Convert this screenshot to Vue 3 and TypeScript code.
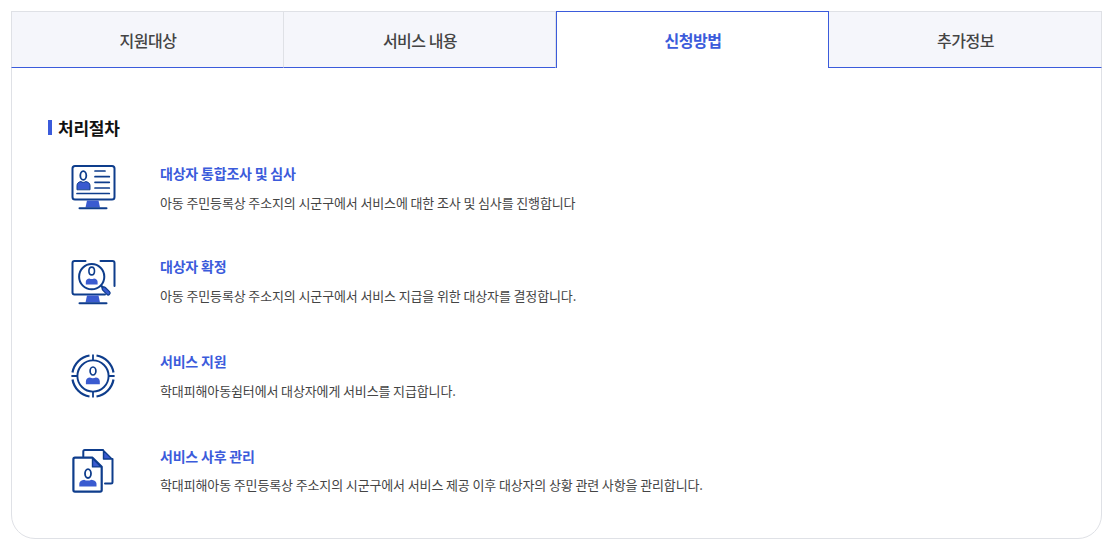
<script setup lang="ts">
const tabs = [
  { label: '지원대상', active: false },
  { label: '서비스 내용', active: false },
  { label: '신청방법', active: true },
  { label: '추가정보', active: false },
]
const steps = [
  { id: 1, title: '대상자 통합조사 및 심사', desc: '아동 주민등록상 주소지의 시군구에서 서비스에 대한 조사 및 심사를 진행합니다' },
  { id: 2, title: '대상자 확정', desc: '아동 주민등록상 주소지의 시군구에서 서비스 지급을 위한 대상자를 결정합니다.' },
  { id: 3, title: '서비스 지원', desc: '학대피해아동쉼터에서 대상자에게 서비스를 지급합니다.' },
  { id: 4, title: '서비스 사후 관리', desc: '학대피해아동 주민등록상 주소지의 시군구에서 서비스 제공 이후 대상자의 상황 관련 사항을 관리합니다.' },
]
</script>

<template>
  <div class="page">
    <div class="card">
      <div class="tabs">
        <div v-for="t in tabs" :key="t.label" class="tab" :class="{ active: t.active }">{{ t.label }}</div>
      </div>
      <div class="body">
        <h2 class="heading"><span>처리절차</span></h2>
        <div class="steps">
          <div v-for="s in steps" :key="s.id" class="step">
            <div class="icon">
              <svg v-if="s.id === 1" width="46" height="46" viewBox="0 0 46 46" fill="none" stroke="#0e3d8c" stroke-width="2" stroke-linecap="round" stroke-linejoin="round">
                <rect x="1.5" y="1" width="42" height="33.5" rx="2.5" />
                <path d="M16 35.5h11.5l1.5 7H14.5z" fill="#3a5bd0" stroke="none" />
                <path d="M8.5 43.2h27" />
                <ellipse cx="12.3" cy="10.5" rx="3" ry="4.4" stroke-width="1.8" />
                <path d="M6 24.4v-4c0-2.4 2-3.6 4-3.8 1.4 1 3.2 1 4.6 0 2 .2 4.4 1.4 4.4 3.8v4z" fill="#3a5bd0" stroke-width="1" />
                <path d="M24 6h10M24 11.7h14.3M24 17.3h14.3M24 23h14.3M6 28.5h32.3" stroke-width="1.7" />
              </svg>
              <svg v-else-if="s.id === 2" width="46" height="46" viewBox="0 0 46 46" fill="none" stroke="#0e3d8c" stroke-width="2" stroke-linecap="round" stroke-linejoin="round">
                <path d="M14.5 1H3.5Q1.5 1 1.5 3v29.5q0 2 2 2H34" />
                <path d="M29.5 1h12q2 0 2 2v23" />
                <path d="M16 35.5h11.5l1.5 7H14.5z" fill="#3a5bd0" stroke="none" />
                <path d="M8.5 43.2h27" />
                <circle cx="20.7" cy="16.7" r="12.6" />
                <ellipse cx="20.7" cy="11" rx="2.8" ry="3.9" stroke-width="1.6" />
                <path d="M14.8 24.6v-2.8c0-2 1.8-3.2 3.6-3.4 1.4.8 3.2.8 4.6 0 1.8.2 3.6 1.4 3.6 3.4v2.8z" fill="#3a5bd0" stroke="none" />
                <path d="M30.5 26.2l2 2" stroke-width="2.4" />
                <path d="M33 28.8l4.2 4.2" stroke="#0e3d8c" stroke-width="5" />
                <path d="M33 28.8l4.2 4.2" stroke="#3a5bd0" stroke-width="2.6" />
              </svg>
              <svg v-else-if="s.id === 3" width="46" height="46" viewBox="0 0 46 46" fill="none" stroke="#0e3d8c" stroke-width="2" stroke-linecap="butt">
                <path d="M25.5 1.5A20.8 20.8 0 0 1 42.5 18.5M42.5 25.5A20.8 20.8 0 0 1 25.5 42.5M18.5 42.5A20.8 20.8 0 0 1 1.5 25.5M1.5 18.5A20.8 20.8 0 0 1 18.5 1.5" stroke-width="2.2" />
                <circle cx="22" cy="22" r="15.6" stroke-width="1.9" />
                <path d="M22 0.4v6.4M22 37.2v6.4M0.4 22h6.4M37.2 22h6.4" stroke-width="1.8" />
                <ellipse cx="22" cy="17" rx="2.9" ry="4" stroke-width="1.7" />
                <path d="M14.9 30.2v-3c0-2.2 1.9-3.5 4-3.7 1.7 1 4.2 1 5.9 0 2.1.2 4 1.5 4 3.7v3z" fill="#3a5bd0" stroke="none" />
              </svg>
              <svg v-else width="46" height="46" viewBox="-1 0 46 46" fill="none" stroke="#0e3d8c" stroke-width="2" stroke-linecap="round" stroke-linejoin="round">
                <path d="M11.3 7.5V2.5q0-1.5 1.5-1.5H31" />
                <path d="M40.5 10v23q0 1.5-1.5 1.5h-6" />
                <path d="M31.5 1.5l8.5 8.5h-8.5z" fill="#3a5bd0" stroke="#0e3d8c" stroke-width="1.4" />
                <path d="M3 8.7h17.5l9.2 9.2v23.2q0 1.6-1.6 1.6H3q-1.6 0-1.6-1.6V10.3q0-1.6 1.6-1.6z" fill="#fff" stroke-width="2.2" />
                <path d="M20.5 9.2l8.7 8.7h-8.7z" fill="#3a5bd0" stroke="#0e3d8c" stroke-width="1.4" />
                <ellipse cx="16" cy="24.6" rx="3" ry="4.4" stroke-width="1.8" />
                <path d="M7.3 37.6v-2.9c0-2.4 2.3-3.7 4.8-4 2.2 1.2 5.1 1.2 7.3 0 2.5.3 5.1 1.6 5.1 4v2.9z" fill="#3a5bd0" stroke="none" />
              </svg>
            </div>
            <div class="text">
              <div class="title">{{ s.title }}</div>
              <div class="desc">{{ s.desc }}</div>
            </div>
          </div>
        </div>
      </div>
    </div>
  </div>
</template>

<style scoped>
.page {
  width: 1115px;
  height: 548px;
  box-sizing: border-box;
  padding: 11px 13px 9px 11px;
  font-family: "Noto Sans CJK KR", "Noto Sans", sans-serif;
  background: #fff;
}
.card {
  height: 528px;
  box-sizing: border-box;
  border: 1px solid #dfe1e6;
  border-radius: 0 0 24px 24px;
  display: flex;
  flex-direction: column;
}
.tabs {
  display: grid;
  grid-template-columns: 273px 272px 273px 273px;
  height: 57px;
  margin: -1px -1px 0;
  flex: none;
}
.tab {
  display: flex;
  align-items: center;
  justify-content: center;
  box-sizing: border-box;
  padding-left: 1px;
  background: #f5f6fb;
  border: 1px solid #dfe1e6;
  border-left: none;
  border-bottom: 1px solid #3b5bdb;
  font-size: 16px;
  font-weight: 500;
  letter-spacing: -0.5px;
  color: #444;
}
.tab:first-child { border-left: 1px solid #dfe1e6; }
.tab.active {
  background: #fff;
  border: 1px solid #3b5bdb;
  border-bottom: none;
  color: #3b5bdb;
  font-weight: 700;
}
.body {
  padding: 52px 36px 0;
}
.heading {
  margin: 0;
  font-size: 17px;
  font-weight: 700;
  letter-spacing: -0.25px;
  color: #111;
  border-left: 4px solid #3b5bdb;
  padding-left: 6px;
  height: 15px;
  display: flex;
  align-items: center;
}
.heading span {
  line-height: 24px;
  margin-top: 1px;
}
.steps {
  margin-top: 24px;
  display: flex;
  flex-direction: column;
  gap: 36.67px;
}
.step {
  display: flex;
  align-items: center;
  height: 58px;
  padding-left: 23px;
}
.step:not(:first-child) .text { margin-top: -3px; }
.icon { width: 89px; flex: none; display: flex; }
.title {
  font-size: 14px;
  line-height: 20px;
  font-weight: 700;
  letter-spacing: -0.2px;
  color: #3b5bdb;
}
.desc {
  margin-top: 9.5px;
  font-size: 13px;
  line-height: 20px;
  letter-spacing: -0.13px;
  color: #444;
}
</style>
